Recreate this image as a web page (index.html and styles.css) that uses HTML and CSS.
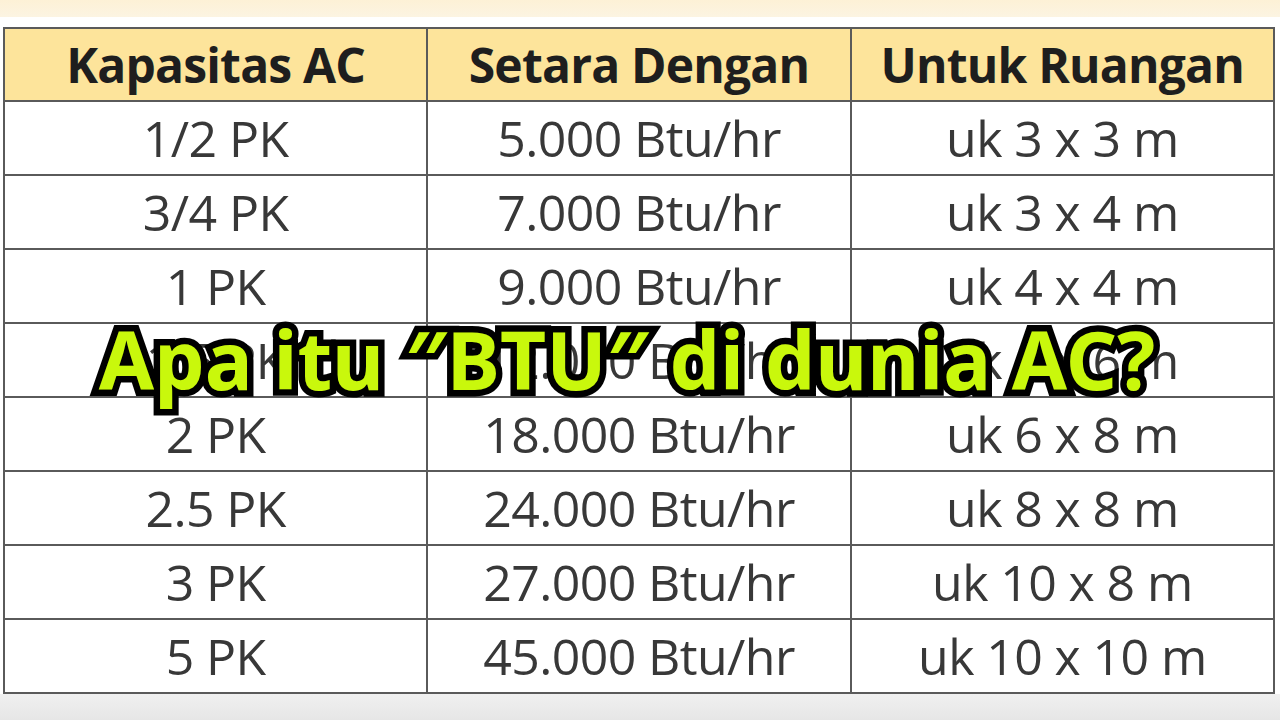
FILE: index.html
```html
<!DOCTYPE html>
<html>
<head>
<meta charset="utf-8">
<link rel="stylesheet" href="styles.css">
</head>
<body>
<div class="page">
  <div class="topband"></div>
  <div class="gap"></div>
  <table class="grid">
    <tr class="head">
      <th>Kapasitas AC</th><th>Setara Dengan</th><th>Untuk Ruangan</th>
    </tr>
    <tr><td>1/2 PK</td><td>5.000 Btu/hr</td><td>uk 3 x 3 m</td></tr>
    <tr><td>3/4 PK</td><td>7.000 Btu/hr</td><td>uk 3 x 4 m</td></tr>
    <tr><td>1 PK</td><td>9.000 Btu/hr</td><td>uk 4 x 4 m</td></tr>
    <tr><td>1.5 PK</td><td>12.000 Btu/hr</td><td>uk 4 x 6 m</td></tr>
    <tr><td>2 PK</td><td>18.000 Btu/hr</td><td>uk 6 x 8 m</td></tr>
    <tr><td>2.5 PK</td><td>24.000 Btu/hr</td><td>uk 8 x 8 m</td></tr>
    <tr><td>3 PK</td><td>27.000 Btu/hr</td><td>uk 10 x 8 m</td></tr>
    <tr><td>5 PK</td><td>45.000 Btu/hr</td><td>uk 10 x 10 m</td></tr>
  </table>
  <div class="bottomband"></div>
  <div class="title">Apa itu ″BTU″ di dunia AC?</div>
</div>
</body>
</html>
```
FILE: styles.css
```css
html, body {
  margin: 0;
  padding: 0;
  width: 1280px;
  height: 720px;
  overflow: hidden;
  background: #ffffff;
}
.page {
  position: relative;
  width: 1280px;
  height: 720px;
  display: flex;
  flex-direction: column;
}
.topband {
  height: 17px;
  background: linear-gradient(to bottom, #fdf1d6, #fcf4e2);
}
.gap {
  height: 10px;
  background: #ffffff;
}
.grid {
  border-collapse: collapse;
  margin-left: 3px;
  width: 1272px;
  table-layout: fixed;
  font-family: "Open Sans", "Liberation Sans", sans-serif;
}
.grid th, .grid td {
  border: 2px solid #5a5a5a;
  text-align: center;
  padding: 0;
  height: 72px;
  line-height: 1;
}
.grid th {
  background: #fde49b;
  color: #1e1e1e;
  font-weight: 700;
  font-size: 48px;
  letter-spacing: -0.8px;
}
.grid td {
  color: #383838;
  font-size: 50px;
  font-weight: 400;
  letter-spacing: -0.6px;
}
.grid tr:first-child th {
  height: 71px;
}
.bottomband {
  flex: 1;
  background: linear-gradient(to bottom, #f0f0f0, #e6e6e6);
}
.title {
  position: absolute;
  left: 0;
  right: 0;
  top: 319px;
  padding-right: 26px;
  text-align: center;
  font-family: "Noto Sans", "DejaVu Sans", sans-serif;
  font-weight: 700;
  font-size: 80px;
  line-height: 1;
  color: #c9f80c;
  -webkit-text-stroke: 13px #000000;
  paint-order: stroke fill;
  letter-spacing: 0px;
}
```
